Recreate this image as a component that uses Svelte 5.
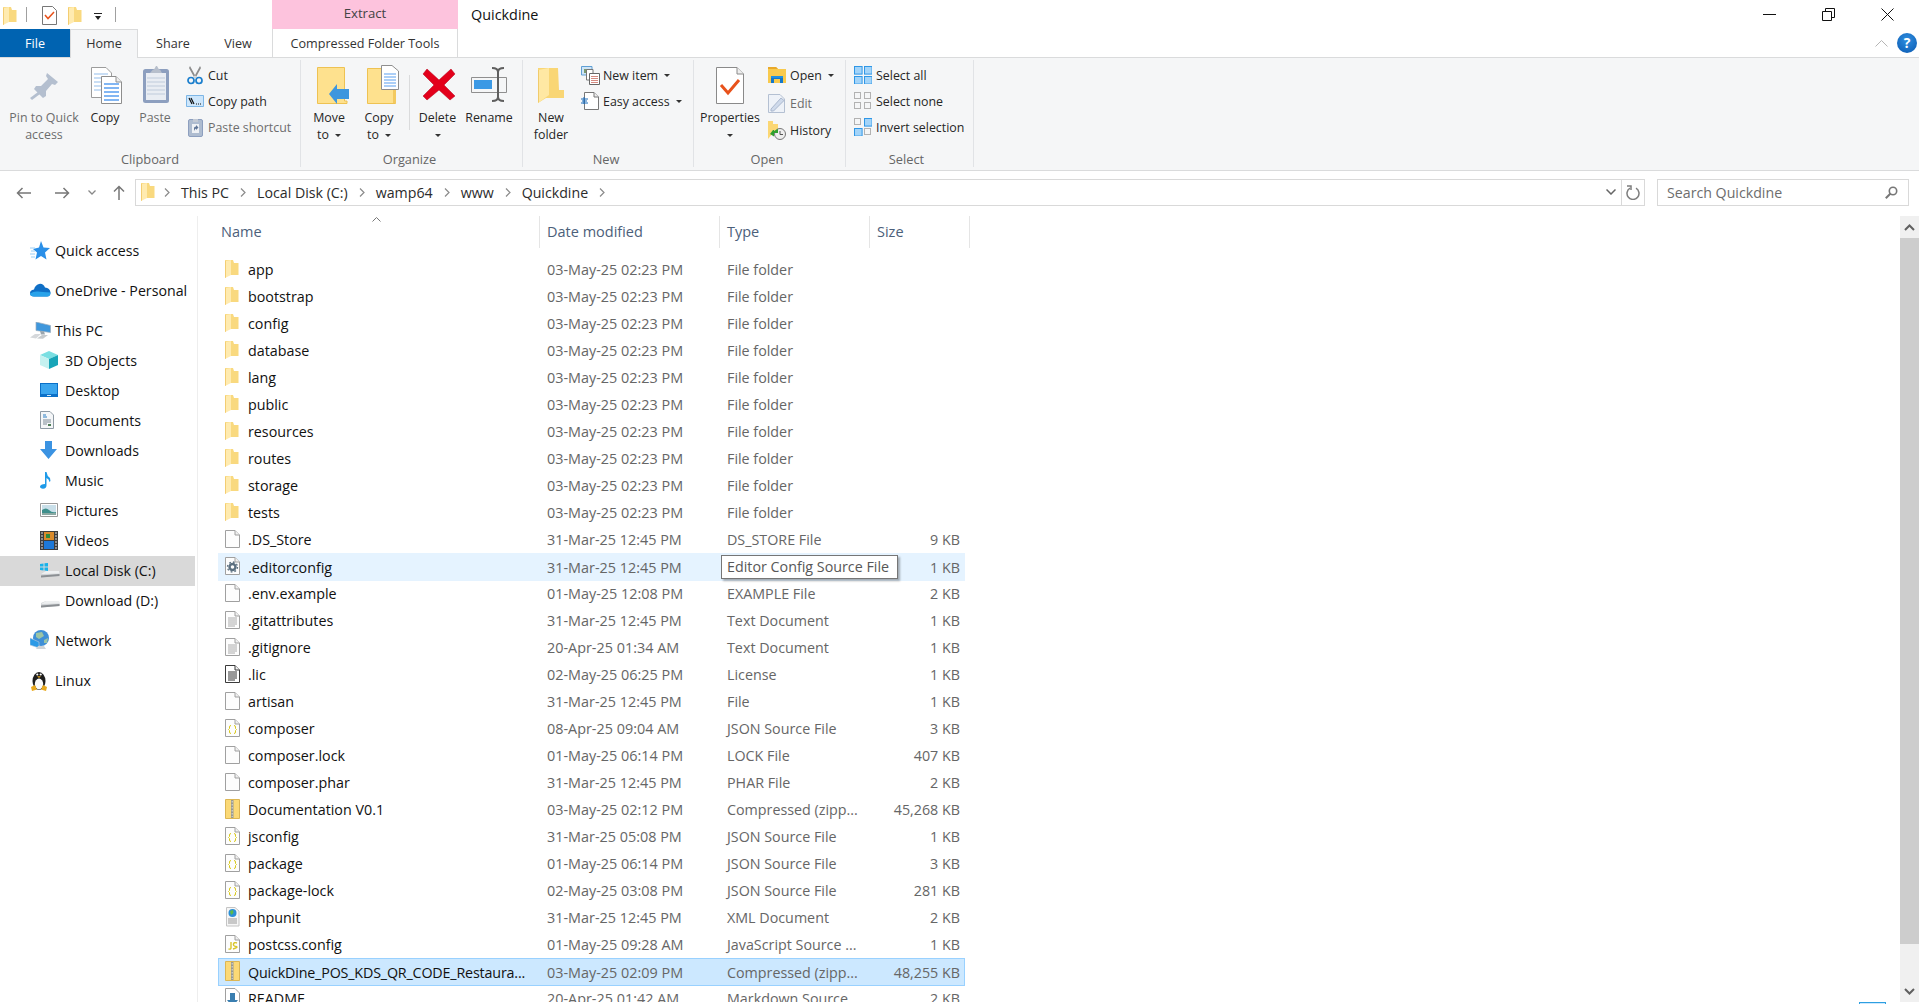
<script>
	const navItems = [
		{ label: 'Quick access', icon: 'star', level: 0, gap: true },
		{ label: 'OneDrive - Personal', icon: 'cloud', level: 0, gap: true },
		{ label: 'This PC', icon: 'pc', level: 0 },
		{ label: '3D Objects', icon: 'cube', level: 1 },
		{ label: 'Desktop', icon: 'desktop', level: 1 },
		{ label: 'Documents', icon: 'docs', level: 1 },
		{ label: 'Downloads', icon: 'downloads', level: 1 },
		{ label: 'Music', icon: 'music', level: 1 },
		{ label: 'Pictures', icon: 'pictures', level: 1 },
		{ label: 'Videos', icon: 'videos', level: 1 },
		{ label: 'Local Disk (C:)', icon: 'cdrive', level: 1, active: true },
		{ label: 'Download (D:)', icon: 'drive', level: 1, gap: true },
		{ label: 'Network', icon: 'network', level: 0, gap: true },
		{ label: 'Linux', icon: 'tux', level: 0 }
	];

	const stamp = '03-May-25 02:23 PM';
	const folders = ['app', 'bootstrap', 'config', 'database', 'lang', 'public', 'resources', 'routes', 'storage', 'tests'];

	const files = [
		...folders.map((name) => ({ name, date: stamp, type: 'File folder', size: '', icon: 'folder' })),
		{ name: '.DS_Store', date: '31-Mar-25 12:45 PM', type: 'DS_STORE File', size: '9 KB', icon: 'blank' },
		{ name: '.editorconfig', date: '31-Mar-25 12:45 PM', type: 'Editor Config Source File', size: '1 KB', icon: 'gear', hot: true },
		{ name: '.env.example', date: '01-May-25 12:08 PM', type: 'EXAMPLE File', size: '2 KB', icon: 'blank' },
		{ name: '.gitattributes', date: '31-Mar-25 12:45 PM', type: 'Text Document', size: '1 KB', icon: 'text' },
		{ name: '.gitignore', date: '20-Apr-25 01:34 AM', type: 'Text Document', size: '1 KB', icon: 'text' },
		{ name: '.lic', date: '02-May-25 06:25 PM', type: 'License', size: '1 KB', icon: 'lic' },
		{ name: 'artisan', date: '31-Mar-25 12:45 PM', type: 'File', size: '1 KB', icon: 'blank' },
		{ name: 'composer', date: '08-Apr-25 09:04 AM', type: 'JSON Source File', size: '3 KB', icon: 'json' },
		{ name: 'composer.lock', date: '01-May-25 06:14 PM', type: 'LOCK File', size: '407 KB', icon: 'blank' },
		{ name: 'composer.phar', date: '31-Mar-25 12:45 PM', type: 'PHAR File', size: '2 KB', icon: 'blank' },
		{ name: 'Documentation V0.1', date: '03-May-25 02:12 PM', type: 'Compressed (zipp...', size: '45,268 KB', icon: 'zip' },
		{ name: 'jsconfig', date: '31-Mar-25 05:08 PM', type: 'JSON Source File', size: '1 KB', icon: 'json' },
		{ name: 'package', date: '01-May-25 06:14 PM', type: 'JSON Source File', size: '3 KB', icon: 'json' },
		{ name: 'package-lock', date: '02-May-25 03:08 PM', type: 'JSON Source File', size: '281 KB', icon: 'json' },
		{ name: 'phpunit', date: '31-Mar-25 12:45 PM', type: 'XML Document', size: '2 KB', icon: 'xml' },
		{ name: 'postcss.config', date: '01-May-25 09:28 AM', type: 'JavaScript Source ...', size: '1 KB', icon: 'js' },
		{ name: 'QuickDine_POS_KDS_QR_CODE_Restaura...', date: '03-May-25 02:09 PM', type: 'Compressed (zipp...', size: '48,255 KB', icon: 'zip', selected: true },
		{ name: 'README', date: '20-Apr-25 01:42 AM', type: 'Markdown Source ...', size: '2 KB', icon: 'md' }
	];

	const crumbs = ['This PC', 'Local Disk (C:)', 'wamp64', 'www', 'Quickdine'];
</script>

{#snippet ic(name)}
	{#if name === 'folder'}
		<svg width="14" height="18" viewBox="0 0 14 18"><path d="M0 0H8L9 3H13.5V15H0Z" fill="#f9d97f" /><path d="M0 1L6 0V15L0 18Z" fill="#ffebb0" /><path d="M0 1V18L1 17.5V1Z" fill="#f3cd72" /></svg>
	{:else if name === 'blank' || name === 'text' || name === 'lic' || name === 'gear' || name === 'json' || name === 'js'}
		<svg width="15" height="18" viewBox="0 0 15 18">
			<path d="M.5.5H10L14.5 5V17.5H.5Z" fill={name === 'lic' ? '#fff' : '#fdfdfd'} stroke={name === 'lic' ? '#3a3a3a' : '#a0a0a0'} />
			<path d="M10 .5V5H14.5" fill="#f0f0f0" stroke={name === 'lic' ? '#3a3a3a' : '#a0a0a0'} />
			{#if name === 'text' || name === 'lic'}
				<path d="M3 7H12M3 9H12M3 11H12M3 13H12M3 15H10" stroke={name === 'lic' ? '#333' : '#aaa'} />
			{:else if name === 'gear'}
				<circle cx="7.5" cy="10" r="3" fill="none" stroke="#5c7080" stroke-width="2.4" />
				<circle cx="7.5" cy="10" r="5" fill="none" stroke="#5c7080" stroke-width="1.3" stroke-dasharray="1.8 2.1" />
			{:else if name === 'json'}
				<path d="M6 6.5Q4.5 6.5 4.5 8V9.5L3.5 10.5L4.5 11.5V13Q4.5 14.5 6 14.5M9 6.5Q10.5 6.5 10.5 8V9.5L11.5 10.5L10.5 11.5V13Q10.5 14.5 9 14.5" fill="none" stroke="#d9c91a" />
			{:else if name === 'js'}
				<path d="M6 7V13Q6 14.5 3.5 14M12 8Q9 7 8.5 9T11 11.5T8 14" fill="none" stroke="#d9c52a" stroke-width="1.4" />
			{/if}
		</svg>
	{:else if name === 'zip'}
		<svg width="15" height="20" viewBox="0 0 15 20"><path d="M.5.5H14.5V19.5H.5Z" fill="#fbd976" stroke="#dcb654" /><path d="M6 1H8.5V19H6Z" fill="#9a9a90" /><path d="M7.2 2V18" stroke="#eee" stroke-width=".8" stroke-dasharray="1.5 1.5" /></svg>
	{:else if name === 'xml'}
		<svg width="15" height="20" viewBox="0 0 15 20"><path d="M1.5.5H10L14 4V19H1.5Z" fill="#f6f6f6" stroke="#c4c4c4" /><circle cx="7.5" cy="6" r="4" fill="#2b8fd6" /><path d="M5 4L8 3L8.5 6L6 8Z" fill="#5dbb48" /><path d="M3 12H12M3 14H12M3 16H12" stroke="#999" /></svg>
	{:else if name === 'md'}
		<svg width="15" height="20" viewBox="0 0 15 20"><path d="M.5.5H10L14.5 5V19.5H.5Z" fill="#fff" stroke="#a0a0a0" /><path d="M5 5H10V12H13L7.5 19L2 12H5Z" fill="#3a7eb0" /></svg>
	{:else if name === 'star'}
		<svg width="20" height="19" viewBox="0 0 20 19"><path d="M11 0L13.5 6.5L20 7L15 11.5L16.5 18.5L11 15L5.5 18.5L7 11.5L3 8L9 6.5Z" fill="#2a8fe8" /><path d="M0 7H5M1 10H5M0 13H5M1 16H5" stroke="#9ccff5" /></svg>
	{:else if name === 'cloud'}
		<svg width="21" height="14" viewBox="0 0 21 14"><path d="M4 13.5Q0 13.5 0 10Q0 7 4 6.5Q5 2 9 1Q13 0 15 4.5Q20 5 20.5 9.5Q20.5 13.5 17 13.5Z" fill="#0f6fc6" /><path d="M0 10.5Q4 8 8 8.5T20.5 9.5Q20.5 13.5 17 13.5H4Q0 13.5 0 10.5Z" fill="#29a3ea" /></svg>
	{:else if name === 'pc'}
		<svg width="21" height="17" viewBox="0 0 21 17"><path d="M6 0L20.5 3.5V10.5L6 8.5Z" fill="#3f97dc" stroke="#9eaebb" stroke-width=".7" /><path d="M10 9L11 12.5H15L14 9.5Z" fill="#9aa5ad" /><path d="M0 15.5L5 12H11L6 16.5Z" fill="#d5d8db" /><path d="M7 16.5L12 13H18L13 16.8Z" fill="#c6cacd" /></svg>
	{:else if name === 'cube'}
		<svg width="18" height="18" viewBox="0 0 18 18"><path d="M9 0L18 4L9 8L0 4Z" fill="#7adfe2" /><path d="M0 4L9 8V18L0 14Z" fill="#c5f1f0" /><path d="M18 4L9 8V18L18 14Z" fill="#18a5b8" /></svg>
	{:else if name === 'desktop'}
		<svg width="18" height="14" viewBox="0 0 18 14"><path d="M0 0H18V14H0Z" fill="#0b70c8" /><path d="M1 1H17V11H1Z" fill="#3aa5ee" /><path d="M7 12H11V13H7Z" fill="#d5eaf8" /></svg>
	{:else if name === 'docs'}
		<svg width="14" height="18" viewBox="0 0 14 18"><path d="M.5.5H10L13.5 4V17.5H.5Z" fill="#f4f6f8" stroke="#8e9aa4" /><path d="M3 4H6M3 6H7" stroke="#2a7ec4" /><path d="M3 9H11M3 11H11M3 13H7" stroke="#7d8a96" /><path d="M8 13H11V15H8Z" fill="#4d7d55" /></svg>
	{:else if name === 'downloads'}
		<svg width="17" height="18" viewBox="0 0 17 18"><path d="M5 0H12V8H17L8.5 18L0 8H5Z" fill="#3b93e2" /></svg>
	{:else if name === 'music'}
		<svg width="11" height="17" viewBox="0 0 11 17"><path d="M5 0H6.5Q7 4 10 6Q11 9 9.5 10Q9 7 6.5 6V13.5Q6.5 16.5 3 16.8Q0 16.5 0 14.5Q.5 12 5 12Z" fill="#1e9ae8" /></svg>
	{:else if name === 'pictures'}
		<svg width="18" height="14" viewBox="0 0 18 14"><path d="M.5.5H17.5V13.5H.5Z" fill="#fff" stroke="#9a9a9a" /><path d="M2 2H16V12H2Z" fill="#c9dfe9" /><path d="M2 7Q6 4 9 7T16 9V12H2Z" fill="#3e8f8c" /><path d="M2 10H16V12H2Z" fill="#8aa8a2" /></svg>
	{:else if name === 'videos'}
		<svg width="18" height="19" viewBox="0 0 18 19"><path d="M0 0H18V19H0Z" fill="#3d3d3d" /><path d="M4 1H14V9H4Z" fill="#d98b2c" /><path d="M4 10H14V18H4Z" fill="#1d78d8" /><path d="M6 3H10V7H6Z" fill="#2e8a3c" /><path d="M1 2H3M1 5H3M1 8H3M1 11H3M1 14H3M1 17H3M15 2H17M15 5H17M15 8H17M15 11H17M15 14H17M15 17H17" stroke="#e0e0e0" /></svg>
	{:else if name === 'cdrive' || name === 'drive'}
		<svg width="20" height="15" viewBox="0 0 20 15">
			{#if name === 'cdrive'}
				<path d="M0 1L3.5 .5V3.5H0ZM4.5 .3L8 0V3.5H4.5ZM0 4.5H3.5V7.5L0 7ZM4.5 4.5H8V8L4.5 7.6Z" fill="#19b2ea" />
			{/if}
			<path d="M1 10L6 8H19L19.5 10.5V13L1 14.5Z" fill="#d2d5d8" /><path d="M1 12.5L19.5 11V13L1 14.5Z" fill="#8b8f93" /><path d="M6 8H19L19.5 10.5L1 11Z" fill="#eef0f1" />
		</svg>
	{:else if name === 'network'}
		<svg width="20" height="20" viewBox="0 0 20 20"><circle cx="11" cy="8" r="8" fill="#3f8fd6" /><path d="M6 3L12 2L14 6L9 9L6 7ZM14 10L18 8L17 13L14 13Z" fill="#9bc4a5" /><path d="M0 8L9 12V18L0 15Z" fill="#2c9ae6" stroke="#bcd" stroke-width=".6" /><path d="M6 19H16L14 16H8Z" fill="#cfd4d8" /></svg>
	{:else if name === 'tux'}
		<svg width="18" height="21" viewBox="0 0 18 21"><ellipse cx="9" cy="11" rx="6.5" ry="9" fill="#1d1d1d" /><ellipse cx="9" cy="14" rx="4.2" ry="5.4" fill="#fafafa" /><circle cx="7.3" cy="4.5" r="1.1" fill="#fff" /><circle cx="10.7" cy="4.5" r="1.1" fill="#fff" /><path d="M7 6.3H11L9 8Z" fill="#e8a81c" /><path d="M1 17L5 15L7 19.5L2 21ZM17 17L13 15L11 19.5L16 21Z" fill="#e8a81c" /></svg>
	{:else if name === 'pin'}
		<svg width="40" height="40" viewBox="0 0 40 40"><path d="M23 8L34 17L31 20L28 19L22 26L22 31L19 33L10 24L12 21L17 21L24 14L22 11Z" fill="#b4bfcf" /><path d="M14 27L6 33L8 35L16 29Z" fill="#b4bfcf" /></svg>
	{:else if name === 'copy'}
		<svg width="40" height="40" viewBox="0 0 40 40">
			<path d="M6.5 2.5H21L26.5 8V32.5H6.5Z" fill="#fff" stroke="#9c9c9c" /><path d="M9 9H23M9 13H23M9 17H23M9 21H23M9 25H23" stroke="#b8d3f2" stroke-width="1.6" />
			<path d="M16.5 11.5H31L36.5 17V38.5H16.5Z" fill="#fff" stroke="#8e8e8e" /><path d="M31 11.5V17H36.5" fill="#eee" stroke="#8e8e8e" /><path d="M19 19H34M19 23H34M19 27H34M19 31H34M19 35H34" stroke="#5a9ff0" stroke-width="1.6" />
		</svg>
	{:else if name === 'paste'}
		<svg width="40" height="40" viewBox="0 0 40 40"><rect x="8" y="4" width="26" height="34" rx="2.5" fill="#8d9fbf" /><path d="M11 8H31V35H11Z" fill="#e9edf3" /><path d="M12 13H30M12 17H30M12 21H30M12 25H30M12 29H30" stroke="#cdd6e3" stroke-width="1.4" /><path d="M15 8L18 4.5H19L21 1H22L24 4.5H25L27 8Z" fill="#b7bfcc" /></svg>
	{:else if name === 'cut'}
		<svg width="18" height="19" viewBox="0 0 18 19"><path d="M4 0L10 11L8.5 12L3 2ZM14 0L8 11L9.5 12L15 2Z" fill="#8d8d8d" /><circle cx="5" cy="14.5" r="3" fill="none" stroke="#1c7fcd" stroke-width="1.7" /><circle cx="13" cy="14.5" r="3" fill="none" stroke="#1c7fcd" stroke-width="1.7" /></svg>
	{:else if name === 'copypath'}
		<svg width="18" height="12" viewBox="0 0 18 12"><path d="M.5.5H17.5V11.5H.5Z" fill="#cde6fb" stroke="#7db6e6" /><path d="M3 3L6 9M5 3L8 9" stroke="#111" stroke-width="1.2" /><path d="M10 9H11M12 9H13M14 9H15" stroke="#111" /></svg>
	{:else if name === 'pasteshortcut'}
		<svg width="15" height="20" viewBox="0 0 15 20"><rect x=".5" y="2.5" width="14" height="17" rx="1.5" fill="#aebcd0" stroke="#8d9fbf" /><path d="M5 2H10V5H5Z" fill="#c2c9d4" /><path d="M4 7H11V16H4Z" fill="#eef1f5" /><path d="M6 14V11Q6 9.5 8 9.5V8L10.5 10.5L8 13V11.5Q7 11.5 6 14Z" fill="#5f7597" /></svg>
	{:else if name === 'moveto'}
		<svg width="40" height="40" viewBox="0 0 40 40"><path d="M8.5 2.5H35.5V36H38V38.5H8.5Z" fill="#fee18e" stroke="#eec252" /><path d="M20 29L28 19V24H40V34H28V39Z" fill="#3e96de" /></svg>
	{:else if name === 'copyto'}
		<svg width="40" height="40" viewBox="0 0 40 40"><path d="M8.5 3.5H36.5V38.5H8.5Z" fill="#fee18e" stroke="#eec252" /><path d="M34 25H37V38H34Z" fill="#f3c95f" /><path d="M22.5 .5H33L39.5 6V24.5H22.5Z" fill="#fff" stroke="#8e8e8e" /><path d="M25 9H37M25 12H37M25 15H37M25 18H37M25 21H37" stroke="#5a9ff0" stroke-width="1.2" /></svg>
	{:else if name === 'delete'}
		<svg width="40" height="40" viewBox="0 0 40 40"><path d="M9 4L21 15L33 4L37 9L26 20L37 31L32 35L21 25L9 35L5 31L16 20L5 9Z" fill="#e3001b" stroke="#b3001a" stroke-width=".5" /></svg>
	{:else if name === 'rename'}
		<svg width="40" height="40" viewBox="0 0 40 40"><path d="M2.5 12.5H37.5V27.5H2.5Z" fill="#f5f6f7" stroke="#8f8f8f" /><path d="M5 15H23V24H5Z" fill="#3b99e5" /><path d="M23 3Q29 3 29 7V32Q29 36 23 36M35 3Q29 3 29 7V32Q29 36 35 36" fill="none" stroke="#5f5f5f" stroke-width="2" /></svg>
	{:else if name === 'newfolder'}
		<svg width="40" height="40" viewBox="0 0 40 40"><path d="M7 3H27L28 25H33V33H15L7 38Z" fill="#f9d675" /><path d="M7 5L18 3V30L7 38Z" fill="#ffe8a3" /><path d="M7 5V38L8 37V5Z" fill="#f0cb6c" /></svg>
	{:else if name === 'newitem'}
		<svg width="19" height="19" viewBox="0 0 19 19"><path d="M.5.5H11V9H.5Z" fill="#cfe5f7" stroke="#5f9fd4" /><path d="M3 3H7V7H3Z" fill="#7a9b6e" /><path d="M5.5 3.5H12V14H5.5Z" fill="#fff" stroke="#777" /><path d="M8.5 7.5H18.5V18.5H8.5Z" fill="#fff" stroke="#666" /><path d="M10 10.5H17M10 12.5H17M10 14.5H17M10 16.5H17" stroke="#d58b82" /></svg>
	{:else if name === 'easy'}
		<svg width="18" height="18" viewBox="0 0 18 18"><path d="M3.5 .5H13L17.5 5V17.5H3.5Z" fill="#fff" stroke="#777" /><path d="M13 .5V5H17.5" fill="#eee" stroke="#777" /><path d="M0 7H7M1 9H6M0 11H7" stroke="#1a6bb8" /><path d="M3 5V12" stroke="#1a6bb8" /></svg>
	{:else if name === 'properties'}
		<svg width="40" height="40" viewBox="0 0 40 40"><path d="M6.5 2.5H27L33.5 9V38.5H6.5Z" fill="#fff" stroke="#8a8a8a" /><path d="M27 2.5V9H33.5" fill="#eee" stroke="#8a8a8a" /><path d="M11 20L18 28L29 15" fill="none" stroke="#e8521b" stroke-width="3" /></svg>
	{:else if name === 'open'}
		<svg width="18" height="17" viewBox="0 0 18 17"><path d="M0 0H8L10 2H18V16H0Z" fill="#f8ca4e" /><path d="M0 0H8L10 2H0Z" fill="#e9a92a" /><path d="M3 9H15V16H12V12H6V16H3Z" fill="#1477c9" /><path d="M3 9H15V11H3Z" fill="#1f8fe0" /></svg>
	{:else if name === 'edit'}
		<svg width="18" height="19" viewBox="0 0 18 19"><path d="M.5.5H12L16.5 5V18.5H.5Z" fill="#eef2f8" stroke="#b4c0d2" /><path d="M3 15L13 4L16 6.5L5.5 17H3Z" fill="#cfdaeb" stroke="#a9b7cd" /></svg>
	{:else if name === 'history'}
		<svg width="18" height="19" viewBox="0 0 18 19"><path d="M0 0L5 0V3H10V12H5L0 18Z" fill="#fbd774" /><circle cx="12" cy="13" r="5.5" fill="#eee" stroke="#777" /><path d="M12 10V13.5H15" fill="none" stroke="#555" /><path d="M10 8V12H6V15.5L2 13L5 9H6V10Z" fill="#2fa02f" /></svg>
	{:else if name === 'all' || name === 'none' || name === 'invert'}
		<svg width="18" height="18" viewBox="0 0 18 18">
			{#each [[0, 0, 'invert'], [10, 0, 'fill'], [0, 10, 'fill'], [10, 10, 'invert']] as [x, y, mode]}
				{#if name === 'all' || (name === 'invert' && mode === 'fill')}
					<rect x={x + 0.5} y={y + 0.5} width="7.6" height="7.6" fill="#a3d4f9" stroke="#2f97e6" />
				{:else}
					<rect x={x + 0.5} y={y + 0.5} width="6" height="6" fill="#f5f6f7" stroke="#b2b2b2" />
				{/if}
			{/each}
		</svg>
	{:else if name === 'checkdoc'}
		<svg width="15" height="19" viewBox="0 0 15 19"><path d="M.5.5H10.5L14.5 4.5V18.5H.5Z" fill="#fff" stroke="#777" /><path d="M3 9L6 12.5L12 6" fill="none" stroke="#e8521b" stroke-width="1.5" /></svg>
	{/if}
{/snippet}

{#snippet big(name, w, line1, line2, caret, off)}
	<div class="big" class:off style="width:{w}px">
		<div class="big-icon">{@render ic(name)}</div>
		<span class="line">{line1}</span>
		<span class="line">{line2}{#if caret}<i class="caret" class:solo={!line2}></i>{/if}</span>
	</div>
{/snippet}

{#snippet small(name, label, caret, off)}
	<div class="small" class:off>
		<span class="small-icon">{@render ic(name)}</span>
		<span>{label}</span>
		{#if caret}<i class="caret"></i>{/if}
	</div>
{/snippet}

<div class="window">
	<header class="titlebar">
		<div class="qat">
			<span class="qat-folder">{@render ic('folder')}</span>
			<b class="qat-sep"></b>
			<span class="qat-check">{@render ic('checkdoc')}</span>
			<span class="qat-folder2">{@render ic('folder')}</span>
			<svg class="qat-drop" width="8" height="7" viewBox="0 0 8 7"><path d="M0 0H8V1H0ZM1 3H7L4 7Z" fill="#222" /></svg>
			<b class="qat-sep last"></b>
		</div>
		<div class="extract">Extract</div>
		<div class="title">Quickdine</div>
		<div class="controls">
			<svg width="13" height="13" viewBox="0 0 13 13"><path d="M0 6.5H13" stroke="#111" /></svg>
			<svg width="13" height="13" viewBox="0 0 13 13"><path d="M.5 3.5H9.5V12.5H.5Z M3.5 3V.5H12.5V9.5H10" fill="none" stroke="#111" /></svg>
			<svg width="13" height="13" viewBox="0 0 13 13"><path d="M.5.5L12.5 12.5M12.5.5L.5 12.5" stroke="#111" /></svg>
		</div>
	</header>

	<nav class="tabs">
		<div class="tab file">File</div>
		<div class="tab home">Home</div>
		<div class="tab share">Share</div>
		<div class="tab view">View</div>
		<div class="tab tools">Compressed Folder Tools</div>
		<svg class="collapse" width="13" height="7" viewBox="0 0 13 7"><path d="M.5 6.5L6.5.5L12.5 6.5" fill="none" stroke="#b5b5b5" /></svg>
		<div class="help">?</div>
	</nav>

	<section class="ribbon">
		<div class="group clipboard">
			<div class="items">
				{@render big('pin', 80, 'Pin to Quick', 'access', false, true)}
				{@render big('copy', 42, 'Copy')}
				{@render big('paste', 58, 'Paste', '', false, true)}
				<div class="stack">
					{@render small('cut', 'Cut')}
					{@render small('copypath', 'Copy path')}
					{@render small('pasteshortcut', 'Paste shortcut', false, true)}
				</div>
			</div>
			<div class="glabel">Clipboard</div>
		</div>
		<div class="group organize">
			<div class="items">
				{@render big('moveto', 56, 'Move', 'to', true)}
				{@render big('copyto', 44, 'Copy', 'to', true)}
				<b class="vsep"></b>
				{@render big('delete', 55, 'Delete', '', true)}
				{@render big('rename', 48, 'Rename')}
			</div>
			<div class="glabel">Organize</div>
		</div>
		<div class="group new">
			<div class="items">
				{@render big('newfolder', 48, 'New', 'folder')}
				<div class="stack">
					{@render small('newitem', 'New item', true)}
					{@render small('easy', 'Easy access', true)}
				</div>
			</div>
			<div class="glabel">New</div>
		</div>
		<div class="group open">
			<div class="items">
				{@render big('properties', 62, 'Properties', '', true)}
				<div class="stack tall">
					{@render small('open', 'Open', true)}
					{@render small('edit', 'Edit', false, true)}
					{@render small('history', 'History')}
				</div>
			</div>
			<div class="glabel">Open</div>
		</div>
		<div class="group select">
			<div class="items">
				<div class="stack">
					{@render small('all', 'Select all')}
					{@render small('none', 'Select none')}
					{@render small('invert', 'Invert selection')}
				</div>
			</div>
			<div class="glabel">Select</div>
		</div>
	</section>

	<div class="addressrow">
		<svg class="nav-arrow back" width="15" height="12" viewBox="0 0 15 12"><path d="M15 6H1.5M6.5 1L1.5 6L6.5 11" fill="none" stroke="#777" stroke-width="1.5" /></svg>
		<svg class="nav-arrow fwd" width="15" height="12" viewBox="0 0 15 12"><path d="M0 6H13.5M8.5 1L13.5 6L8.5 11" fill="none" stroke="#777" stroke-width="1.5" /></svg>
		<svg class="nav-arrow recent" width="8" height="5" viewBox="0 0 8 5"><path d="M.5.5L4 4L7.5.5" fill="none" stroke="#888" stroke-width="1.3" /></svg>
		<svg class="nav-arrow up" width="12" height="15" viewBox="0 0 12 15"><path d="M6 15V1.5M1 6.5L6 1.5L11 6.5" fill="none" stroke="#777" stroke-width="1.5" /></svg>
		<div class="address">
			<span class="addr-folder">{@render ic('folder')}</span>
			{#each crumbs as crumb}
				<svg class="chev" width="6" height="9" viewBox="0 0 6 9"><path d="M1 .5L5 4.5L1 8.5" fill="none" stroke="#8a8a8a" stroke-width="1.2" /></svg>
				<span>{crumb}</span>
			{/each}
			<svg class="chev" width="6" height="9" viewBox="0 0 6 9"><path d="M1 .5L5 4.5L1 8.5" fill="none" stroke="#8a8a8a" stroke-width="1.2" /></svg>
			<svg class="addr-drop" width="10" height="6" viewBox="0 0 10 6"><path d="M.5.5L5 5L9.5.5" fill="none" stroke="#666" stroke-width="1.5" /></svg>
			<div class="refresh">
				<svg width="14" height="15" viewBox="0 0 14 15"><path d="M4 3.2A6 6 0 1 0 10 3.2" fill="none" stroke="#7d7d7d" stroke-width="1.5" /><path d="M1 1H5V5" fill="none" stroke="#7d7d7d" stroke-width="1.5" /></svg>
			</div>
		</div>
		<div class="search">
			<span>Search Quickdine</span>
			<svg width="13" height="13" viewBox="0 0 13 13"><circle cx="8" cy="5" r="3.7" fill="none" stroke="#777" stroke-width="1.6" /><path d="M5.5 7.5L.8 12.2" stroke="#777" stroke-width="2" /></svg>
		</div>
	</div>

	<main class="content">
		<aside class="sidebar">
			{#each navItems as item}
				<div class="nav-row" class:child={item.level === 1} class:active={item.active} class:gap={item.gap}>
					<span class="nav-icon">{@render ic(item.icon)}</span>
					<span>{item.label}</span>
				</div>
			{/each}
		</aside>

		<section class="list">
			<div class="columns">
				<div class="col name">Name
					<svg class="sort" width="9" height="5" viewBox="0 0 9 5"><path d="M.5 4.5L4.5.5L8.5 4.5" fill="none" stroke="#777" /></svg>
				</div>
				<div class="col date">Date modified</div>
				<div class="col type">Type</div>
				<div class="col size">Size</div>
			</div>
			<div class="rows">
				{#each files as file}
					<div class="row" class:hot={file.hot} class:selected={file.selected}>
						<span class="row-icon">{@render ic(file.icon)}</span>
						<span class="row-name">{file.name}</span>
						<span class="row-date">{file.date}</span>
						<span class="row-type">{file.type}</span>
						<span class="row-size">{file.size}</span>
						{#if file.hot}<span class="tooltip">{file.type}</span>{/if}
					</div>
				{/each}
			</div>
		</section>

		<div class="scrollbar">
			<div class="sb-btn">
				<svg width="11" height="7" viewBox="0 0 11 7"><path d="M1 6L5.5 1.5L10 6" fill="none" stroke="#606060" stroke-width="2" /></svg>
			</div>
			<div class="sb-thumb"></div>
			<div class="sb-track"></div>
			<div class="sb-btn">
				<svg width="11" height="7" viewBox="0 0 11 7"><path d="M1 1L5.5 5.5L10 1" fill="none" stroke="#606060" stroke-width="2" /></svg>
			</div>
		</div>
	</main>

	<footer class="statusbar">
		<div class="viewbtn"></div>
	</footer>
</div>

<style>
	:global(body) {
		margin: 0;
		background: #fff;
	}

	.window {
		width: 1919px;
		height: 1004px;
		overflow: hidden;
		display: flex;
		flex-direction: column;
		font-family: 'Open Sans', 'Noto Sans', sans-serif;
		font-size: 14.2px;
		color: #1c1c1c;
		background: #fff;
	}

	svg {
		display: block;
		flex: none;
	}

	/* title bar */
	.titlebar {
		height: 29px;
		flex: none;
		display: flex;
	}

	.qat {
		width: 272px;
		position: relative;
		display: flex;
		align-items: center;
		flex: none;
	}

	.qat-folder {
		margin-left: 3px;
		margin-top: 2px;
	}

	.qat-sep {
		width: 1px;
		height: 15px;
		margin-left: 9px;
		background: #a0a0a0;
	}

	.qat-sep.last {
		margin-left: 13px;
	}

	.qat-check {
		margin-left: 15px;
		margin-top: 2px;
	}

	.qat-folder2 {
		margin-left: 11px;
		margin-top: 2px;
	}

	.qat-drop {
		margin-left: 12px;
		margin-top: 4px;
	}

	.extract {
		width: 186px;
		flex: none;
		background: #fdc3dd;
		color: #444;
		text-align: center;
		line-height: 27px;
		font-size: 13.2px;
	}

	.title {
		margin-left: 13px;
		line-height: 29px;
		font-size: 14.4px;
		color: #111;
	}

	.controls {
		margin-left: auto;
		margin-right: 25px;
		display: flex;
		gap: 46px;
		padding-top: 8px;
	}

	/* tabs */
	.tabs {
		height: 28px;
		flex: none;
		display: flex;
		align-items: stretch;
		border-bottom: 1px solid #dadbdc;
		box-sizing: content-box;
	}

	.tab {
		text-align: center;
		line-height: 29px;
		font-size: 12.6px;
		color: #333;
		box-sizing: border-box;
	}

	.file {
		width: 70px;
		background: #0063b1;
		color: #fff;
	}

	.home {
		width: 68px;
		background: #f5f6f7;
		border: 1px solid #dadbdc;
		border-bottom: 0;
		height: 29px;
		line-height: 28px;
	}

	.share {
		width: 70px;
	}

	.view {
		width: 60px;
	}

	.tools {
		width: 186px;
		margin-left: 4px;
		border-left: 1px solid #dadbdc;
		border-right: 1px solid #dadbdc;
	}

	.collapse {
		margin-left: auto;
		margin-right: 9px;
		align-self: center;
	}

	.help {
		width: 20px;
		height: 20px;
		margin-right: 2px;
		align-self: center;
		border-radius: 50%;
		background: radial-gradient(circle at 50% 35%, #2f8fe0, #0a58b0);
		color: #fff;
		text-align: center;
		font-weight: 700;
		font-size: 14px;
		line-height: 20px;
	}

	/* ribbon */
	.ribbon {
		flex: none;
		display: flex;
		padding: 2px 0 3px;
		box-sizing: border-box;
		height: 113px;
		background: #f5f6f7;
		border-bottom: 1px solid #dadbdc;
	}

	.group {
		flex: none;
		display: flex;
		flex-direction: column;
		border-right: 1px solid #e1e3e6;
		box-sizing: border-box;
	}

	.clipboard {
		width: 301px;
		padding-left: 4px;
	}

	.organize {
		width: 222px;
	}

	.new {
		width: 171px;
		padding-left: 4px;
	}

	.open {
		width: 152px;
		padding-left: 5px;
	}

	.select {
		width: 128px;
		padding-left: 6px;
	}

	.items {
		flex: 1;
		display: flex;
		min-height: 0;
	}

	.glabel {
		height: 16px;
		padding-top: 2px;
		line-height: 17px;
		text-align: center;
		color: #666;
		font-size: 12.8px;
		margin-left: -4px;
	}

	.new .glabel {
		margin-right: 4px;
	}

	.open .glabel {
		margin-right: 6px;
	}

	.select .glabel {
		margin-right: 8px;
	}

	.big {
		flex: none;
		display: flex;
		flex-direction: column;
		align-items: center;
		color: #262626;
		font-size: 12.4px;
	}

	.big.off {
		color: #6d6d6d;
	}

	.big-icon {
		height: 44px;
		padding-top: 5px;
	}

	.line {
		height: 17px;
		line-height: 17px;
		white-space: nowrap;
	}

	.caret {
		display: inline-block;
		width: 0;
		height: 0;
		margin-left: 6px;
		vertical-align: 2px;
		border: 3px solid transparent;
		border-top: 3.5px solid #333;
		border-bottom: 0;
	}

	.caret.solo {
		margin-left: 0;
	}

	.vsep {
		width: 1px;
		height: 55px;
		flex: none;
		margin: 15px 0 0 8px;
		background: #dadbdc;
	}

	.stack {
		display: flex;
		flex-direction: column;
		padding: 2px 0 0 2px;
	}

	.new .stack {
		padding-left: 6px;
	}

	.stack.tall {
		padding: 2px 0 0 7px;
	}

	.small {
		height: 26px;
		display: flex;
		align-items: center;
		color: #262626;
		font-size: 12.4px;
		white-space: nowrap;
	}

	.tall .small {
		height: 27.5px;
	}

	.small.off {
		color: #6d6d6d;
	}

	.small-icon {
		width: 18px;
		margin-right: 4px;
		display: flex;
		justify-content: center;
	}

	/* address bar */
	.addressrow {
		height: 27px;
		flex: none;
		margin-top: 8px;
		display: flex;
		align-items: center;
	}

	.back {
		margin-left: 16px;
	}

	.fwd {
		margin-left: 24px;
	}

	.recent {
		margin-left: 18px;
	}

	.up {
		margin-left: 17px;
	}

	.address {
		width: 1510px;
		height: 27px;
		margin-left: 10px;
		padding-bottom: 1px;
		box-sizing: border-box;
		border: 1px solid #d9d9d9;
		display: flex;
		align-items: center;
		gap: 11px;
		color: #2b2b2b;
	}

	.addr-folder {
		margin-left: 5px;
		margin-right: -2px;
	}

	.addr-drop {
		margin-left: auto;
	}

	.refresh {
		width: 22px;
		height: 25px;
		margin-left: -6px;
		margin-bottom: -1px;
		border-left: 1px solid #d9d9d9;
		display: flex;
		align-items: center;
		justify-content: center;
	}

	.search {
		width: 252px;
		height: 27px;
		margin-left: 12px;
		box-sizing: border-box;
		border: 1px solid #d9d9d9;
		display: flex;
		align-items: center;
		justify-content: space-between;
		padding: 0 10px 0 9px;
		color: #6d6d6d;
	}

	/* content */
	.content {
		flex: none;
		height: 786px;
		margin-top: 10px;
		display: flex;
		overflow: hidden;
	}

	.sidebar {
		width: 198px;
		flex: none;
		box-sizing: border-box;
		padding-top: 20px;
		border-right: 1px solid #eeeeee;
	}

	.nav-row {
		height: 30px;
		width: 195px;
		display: flex;
		align-items: center;
		padding: 0 0 2px 30px;
		box-sizing: border-box;
		color: #111;
	}

	.nav-row.child {
		padding-left: 40px;
	}

	.nav-row.gap {
		margin-bottom: 10px;
	}

	.nav-row.active {
		background: #d9d9d9;
	}

	.nav-icon {
		width: 25px;
		flex: none;
		display: flex;
	}

	.list {
		flex: 1;
		min-width: 0;
		overflow: hidden;
	}

	.columns {
		height: 32px;
		margin-left: 20px;
		width: 751px;
		display: flex;
		color: #4c607a;
		font-size: 14.5px;
	}

	.col {
		box-sizing: border-box;
		border-right: 1px solid #e5e5e5;
		line-height: 32px;
		flex: none;
	}

	.col.name {
		width: 322px;
		padding-left: 3px;
		position: relative;
	}

	.sort {
		position: absolute;
		top: 1px;
		left: 154px;
	}

	.col.date {
		width: 180px;
		padding-left: 7px;
	}

	.col.type {
		width: 150px;
		padding-left: 7px;
	}

	.col.size {
		width: 100px;
		padding-left: 7px;
	}

	.rows {
		margin-top: 8px;
		margin-left: 20px;
		width: 747px;
	}

	.row {
		height: 27px;
		box-sizing: border-box;
		display: grid;
		grid-template-columns: 30px 299px 180px 149px 1fr;
		align-items: center;
		font-size: 14.3px;
		white-space: nowrap;
		position: relative;
	}

	.row.hot,
	.row.selected {
		height: 28px;
		margin-bottom: -1px;
	}

	.row.hot {
		background: #e5f3ff;
	}

	.row.selected {
		background: #cce8ff;
		outline: 1px solid #99d1ff;
		outline-offset: -1px;
	}

	.row-icon {
		display: flex;
		padding-left: 7px;
		margin-top: -2px;
	}

	.row-name {
		color: #111;
	}

	.row.selected .row-name {
		letter-spacing: -0.17px;
	}

	.row-date,
	.row-type,
	.row-size {
		color: #666;
	}

	.row-date {
		font-size: 14.4px;
	}

	.row-size {
		text-align: right;
		padding-right: 5px;
	}

	.tooltip {
		position: absolute;
		top: 2px;
		left: 503px;
		width: 177px;
		height: 24px;
		box-sizing: border-box;
		padding-left: 5px;
		line-height: 21px;
		background: #fff;
		border: 1px solid #767676;
		box-shadow: 2px 2px 2px rgba(0, 0, 0, 0.3);
		color: #575757;
	}

	/* scrollbar */
	.scrollbar {
		width: 19px;
		flex: none;
		display: flex;
		flex-direction: column;
		background: #f0f0f0;
	}

	.sb-btn {
		height: 22px;
		flex: none;
		display: flex;
		align-items: center;
		justify-content: center;
	}

	.sb-thumb {
		height: 706px;
		flex: none;
		background: #cdcdcd;
	}

	.sb-track {
		flex: 1;
	}

	.statusbar {
		flex: 1;
		overflow: hidden;
	}

	.viewbtn {
		width: 27px;
		height: 8px;
		margin-left: 1859px;
		box-sizing: border-box;
		border: 1px solid #2d9fe0;
		background: #cde8ff;
	}
</style>
